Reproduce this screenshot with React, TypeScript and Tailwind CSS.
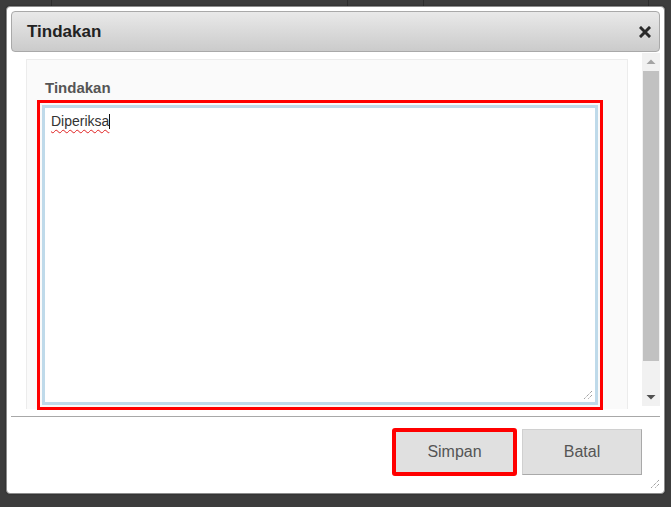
import React from "react";

const topCells = [52, 296, 76, 225];

const Grip = ({ className }: { className?: string }) => (
  <svg width="10" height="10" viewBox="0 0 10 10" className={className}>
    <path d="M9 1 L1 9 M9 5 L5 9" stroke="#777" strokeWidth="1" strokeDasharray="1 1" />
  </svg>
);

export default function App() {
  return (
    <div
      className="relative w-[671px] h-[507px] overflow-hidden bg-[#3c3c3c]"
      style={{ fontFamily: '"Liberation Sans", Arial, sans-serif' }}
    >
      {/* table behind the dialog */}
      <div className="flex h-[6px]">
        {topCells.map((w, i) => (
          <div key={i} className="h-full border-r border-[#2c2c2c]" style={{ width: w }} />
        ))}
      </div>

      {/* dialog */}
      <div className="absolute left-[6px] top-[6px] w-[659px] h-[488px] bg-white rounded-[4px] border border-[#8c8c8c] p-[4px] flex flex-col shadow-[0_0_2px_rgba(0,0,0,0.4)]">
        <div className="h-[41px] shrink-0 rounded-[4px] border border-[#a9a9a9] bg-gradient-to-b from-[#e9e9e9] to-[#cbcbcb] flex items-center justify-between pl-[15px] pr-[8px]">
          <span className="text-[17px] font-bold text-[#222] mt-[1px]">Tindakan</span>
          <svg width="12" height="12" viewBox="0 0 12 12">
            <path d="M2 2 L10 10 M10 2 L2 10" stroke="#2a2a2a" strokeWidth="3" strokeLinecap="square" />
          </svg>
        </div>

        {/* scroll area */}
        <div className="flex h-[356px] shrink-0">
          <div className="flex-1 pl-[15px] pr-[14px] pt-[7px]">
            <div className="h-[350px] bg-[#fafafa] border border-[#ececec] border-b-0 pl-[10px] pr-[24px] pt-[19px]">
              <div className="pl-[8px] text-[15px] font-bold text-[#555] leading-[17px]">Tindakan</div>
              <div className="mt-[4px] h-[310px] border-[3px] border-[#ff0000] p-[2px]">
                <div className="relative h-full bg-white border-[3px] border-[#bfdaea] px-[6px] pt-[3px] text-[14px] text-[#333]">
                  <span className="underline decoration-wavy decoration-[#e02020] decoration-1 underline-offset-[3px]">Diperiksa</span>
                  <span className="inline-block w-px h-[15px] bg-[#111] align-[-3px]" />
                  <Grip className="absolute right-[2px] bottom-[2px]" />
                </div>
              </div>
            </div>
          </div>
          <div className="w-[18px] mt-[1px] mb-[2px] bg-[#f1f1f1] flex flex-col items-center">
            <svg width="18" height="18" viewBox="0 0 18 18">
              <path d="M4.5 11 L9 6.5 L13.5 11 Z" fill="#a3a3a3" />
            </svg>
            <div className="w-[16px] h-[290px] bg-[#c1c1c1]" />
            <div className="flex-1" />
            <svg width="18" height="18" viewBox="0 0 18 18">
              <path d="M4.5 7 L9 11.5 L13.5 7 Z" fill="#505050" />
            </svg>
          </div>
        </div>

        <div className="mt-[8px] border-t border-[#a8a8a8]" />

        {/* footer */}
        <div className="relative flex justify-end gap-[5px] pr-[18px] mt-[11px]">
          <div className="w-[125px] h-[48px] border-[4px] border-[#ff0000] rounded-[3px]">
            <button className="w-full h-full bg-[#e0e0e0] text-[16px] text-[#555]">Simpan</button>
          </div>
          <button className="w-[120px] h-[46px] mt-[1px] bg-[#e0e0e0] border border-[#d0d0d0] border-b-[#a9a9a9] border-r-[#a9a9a9] text-[16px] text-[#555]">
            Batal
          </button>
        </div>
        <div className="flex-1 flex items-end justify-end">
          <Grip />
        </div>
      </div>
    </div>
  );
}
